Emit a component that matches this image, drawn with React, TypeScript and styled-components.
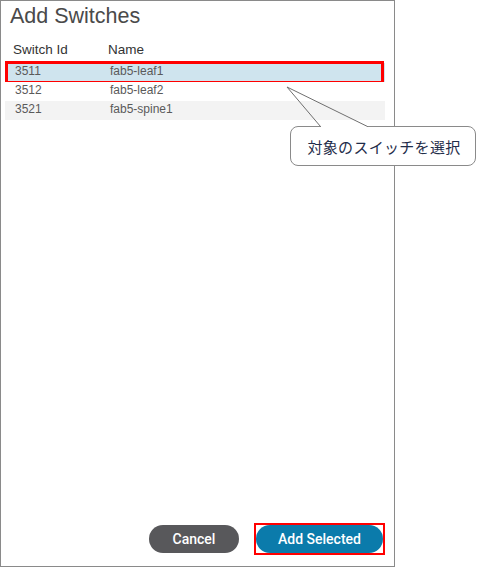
import React from 'react'
import styled, { createGlobalStyle } from 'styled-components'

const GlobalStyle = createGlobalStyle`
    html, body {
        margin: 0;
        padding: 0;
        background: #fff;
    }
    body {
        font-family: "Liberation Sans", Arial, sans-serif;
    }
`

const Page = styled.div`
    position: relative;
    width: 477px;
    height: 567px;
    overflow: hidden;
`

const Panel = styled.div`
    box-sizing: border-box;
    width: 395px;
    height: 567px;
    border: 1px solid #8a8a8a;
    display: flex;
    flex-direction: column;
    padding: 2px 12px 11px 4px;
`

const Title = styled.h2`
    margin: 0 0 13px 5px;
    font-size: 21.5px;
    line-height: 26px;
    font-weight: normal;
    color: #4a4a4a;
`

const Table = styled.div`
    width: 380px;
`

const Row = styled.div<{ $shade?: 'blue' | 'gray' }>`
    position: relative;
    display: grid;
    grid-template-columns: 95px 1fr;
    height: 19px;
    font-size: 12px;
    line-height: 17px;
    color: #5a5a5a;
    background: ${p => p.$shade === 'blue' ? '#cfe4ee' : p.$shade === 'gray' ? '#f3f3f3' : '#fff'};
`

const HeaderRow = styled.div`
    display: grid;
    grid-template-columns: 95px 1fr;
    font-size: 13.5px;
    line-height: 16px;
    color: #333;
    padding-bottom: 5px;
`

const HeadCell = styled.div`
    padding-left: 8px;
`

const Cell = styled.div`
    padding-left: 10px;
`

const Marked = styled.div`
    &::after {
        content: '';
        position: absolute;
        left: 0;
        right: 1px;
        top: -2px;
        bottom: -2px;
        border: 3px solid #ff0000;
        pointer-events: none;
    }
`

const Footer = styled.div`
    margin-top: auto;
    display: flex;
    justify-content: flex-end;
    align-items: center;
    gap: 15px;
`

const Button = styled.button<{ $primary?: boolean }>`
    box-sizing: border-box;
    height: 28px;
    width: ${p => p.$primary ? '127px' : '90px'};
    border: none;
    border-radius: 14px;
    font-family: Roboto, "Liberation Sans", Arial, sans-serif;
    font-size: 14px;
    font-weight: 500;
    color: #fff;
    background: ${p => p.$primary ? '#0b7bab' : '#58585b'};
    padding: 0;
    display: block;
`

const Highlight = styled.div`
    border: 2.5px solid #ff0000;
    padding: 0;
    line-height: 0;
    margin-right: -3px;
`

const Callout = styled.div`
    position: absolute;
    left: 290px;
    top: 126px;
    box-sizing: border-box;
    width: 186px;
    height: 40px;
    border: 1px solid #8a8a8a;
    border-radius: 8px;
    background: #fff;
    display: flex;
    align-items: center;
    justify-content: center;
    padding-left: 2px;
    font-family: "Noto Sans CJK JP", "Noto Sans", sans-serif;
    font-size: 15px;
    color: #1f2d4a;
    letter-spacing: 0.3px;
`

const Tail = styled.svg`
    position: absolute;
    left: 284px;
    top: 84px;
    overflow: visible;
`

const switches = [
    { id: '3511', name: 'fab5-leaf1' },
    { id: '3512', name: 'fab5-leaf2' },
    { id: '3521', name: 'fab5-spine1' },
]

const App = () => {
    return (
        <Page>
            <GlobalStyle />
            <Panel>
                <Title>Add Switches</Title>
                <Table>
                    <HeaderRow>
                        <HeadCell>Switch Id</HeadCell>
                        <HeadCell>Name</HeadCell>
                    </HeaderRow>
                    {switches.map((sw, i) => {
                        const shade = i === 0 ? 'blue' : i % 2 === 0 ? 'gray' : undefined
                        return (
                            <Row key={sw.id} $shade={shade} as={i === 0 ? Marked : undefined}>
                                <Cell>{sw.id}</Cell>
                                <Cell>{sw.name}</Cell>
                            </Row>
                        )
                    })}
                </Table>
                <Footer>
                    <Button>Cancel</Button>
                    <Highlight>
                        <Button $primary>Add Selected</Button>
                    </Highlight>
                </Footer>
            </Panel>
            <Callout>対象のスイッチを選択</Callout>
            <Tail width="90" height="44" viewBox="0 0 90 44">
                <rect x="37" y="40.5" width="46" height="3" fill="#fff" />
                <line x1="3" y1="3" x2="36.5" y2="42.5" stroke="#6f6f6f" strokeWidth="1" />
                <line x1="3" y1="3" x2="83.5" y2="42.5" stroke="#6f6f6f" strokeWidth="1" />
            </Tail>
        </Page>
    )
}

export default App
